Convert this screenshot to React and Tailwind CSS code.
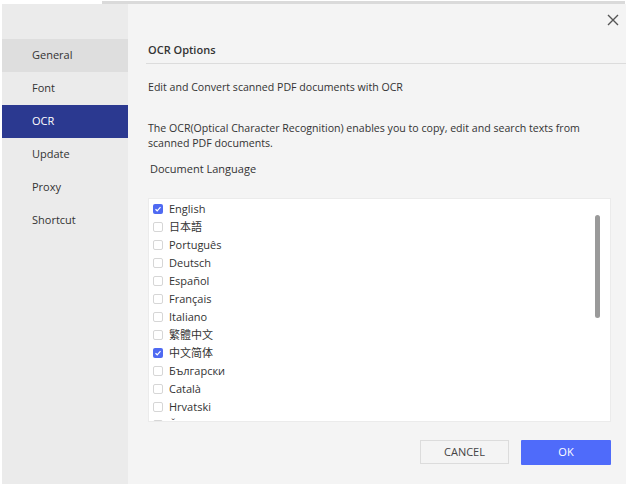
// App.jsx — preferences dialog, OCR tab selected.

const menu = ['General', 'Font', 'OCR', 'Update', 'Proxy', 'Shortcut']

// The list box clips the last row, as the scrolled list does.
const languages = [
  { name: 'English', checked: true },
  { name: '日本語' },
  { name: 'Português' },
  { name: 'Deutsch' },
  { name: 'Español' },
  { name: 'Français' },
  { name: 'Italiano' },
  { name: '繁體中文' },
  { name: '中文简体', checked: true },
  { name: 'Български' },
  { name: 'Català' },
  { name: 'Hrvatski' },
  { name: 'Čeština' },
]

function CheckBox({ checked }) {
  if (checked) {
    return (
      <span className="w-[10px] h-[10px] rounded-[2px] bg-[#4f6af2] flex items-center justify-center shrink-0">
        <svg width="8" height="8" viewBox="0 0 8 8" fill="none">
          <path d="M1.5 4.2 L3.2 5.8 L6.5 2.2" stroke="white" strokeWidth="1.2" />
        </svg>
      </span>
    )
  }
  return <span className="w-[10px] h-[10px] rounded-[2px] border border-[#d6d6d6] bg-white shrink-0" />
}

export default function App() {
  return (
    <div
      className="w-[628px] h-[487px] bg-white pt-[1px] overflow-hidden text-[#333] text-[11px]"
      style={{ fontFamily: '"Open Sans", "Noto Sans CJK SC", sans-serif' }}
    >
      <div className="ml-[102px] mr-[3px] h-[3px] bg-[#dadada]" />
      <div className="ml-[2px] w-[624px] h-[480px] flex">
        {/* Left menu */}
        <div className="w-[126px] bg-[#ebebeb] pt-[35px]">
          {menu.map((m) => (
            <div
              key={m}
              className={
                'h-[33px] flex items-center pl-[30px] ' +
                (m === 'OCR' ? 'bg-[#2b3990] text-white' : m === 'General' ? 'bg-[#dedede]' : '')
              }
            >
              {m}
            </div>
          ))}
        </div>

        {/* Content */}
        <div className="relative flex-1 bg-[#f4f4f4] flex flex-col">
          <button className="absolute right-[6px] top-[9px] w-[14px] h-[14px] flex items-center justify-center">
            <svg width="12" height="12" viewBox="0 0 12 12" fill="none">
              <path d="M1 1 L11 11 M11 1 L1 11" stroke="#555" strokeWidth="1.4" />
            </svg>
          </button>

          <div className="ml-[18px] pl-[2px] pt-[37px] pb-[5px] border-b border-[#dcdcdc] leading-[17px] font-semibold">
            OCR Options
          </div>

          <p className="ml-[20px] mt-[15px] leading-[17px] text-[10.6px]">
            Edit and Convert scanned PDF documents with OCR
          </p>

          <p className="ml-[20px] mt-[25px] leading-[15px] pr-[30px] text-[10.6px]">
            The OCR(Optical Character Recognition) enables you to copy, edit and search texts from scanned PDF
            documents.
          </p>

          <p className="ml-[22px] mt-[9px] leading-[17px]">Document Language</p>

          <div className="relative ml-[20px] mt-[21px] w-[463px] h-[224px] bg-white border border-[#ebebeb] overflow-hidden">
            <ul className="pt-[1px]">
              {languages.map((l) => (
                <li key={l.name} className="h-[18px] flex items-center gap-[6px] pl-[4px]">
                  <CheckBox checked={l.checked} />
                  <span className="leading-[18px]">{l.name}</span>
                </li>
              ))}
            </ul>
            <div className="absolute right-[10px] top-[16px] w-[5px] h-[103px] rounded-full bg-[#9a9a9a]" />
          </div>

          <div className="flex justify-end gap-[12px] mt-[18px] mr-[15px]">
            <button className="w-[89px] h-[24px] bg-[#f4f4f4] border border-[#dcdcdc] text-[#444] text-[11px]">
              CANCEL
            </button>
            <button className="w-[90px] h-[25px] bg-[#4f6bfa] rounded-[1px] text-white text-[11px]">OK</button>
          </div>
        </div>
      </div>
    </div>
  )
}
